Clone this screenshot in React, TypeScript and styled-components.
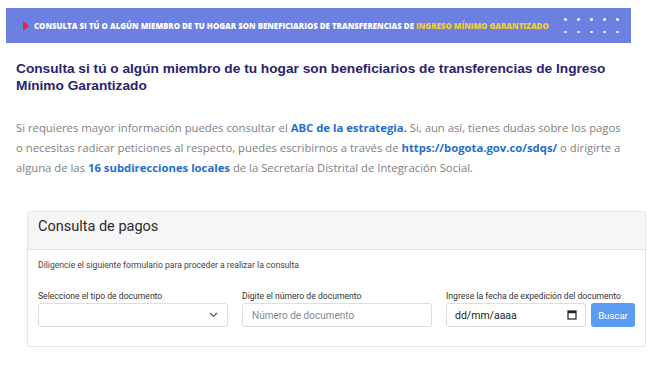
import React from 'react';
import styled, { createGlobalStyle } from 'styled-components';

const GlobalStyle = createGlobalStyle`
  html, body {
    margin: 0;
    padding: 0;
    background: #ffffff;
  }
  * {
    box-sizing: border-box;
  }
`;

const Page = styled.div`
  width: 650px;
  height: 365px;
  overflow: hidden;
  padding: 8px 19px 0 6px;
`;

const Banner = styled.div`
  height: 35px;
  width: 625px;
  background: #6c80e2;
  display: flex;
  align-items: center;
  padding-left: 17px;
  padding-right: 12px;
`;

const Arrow = styled.span`
  width: 0;
  height: 0;
  border-top: 5px solid transparent;
  border-bottom: 5px solid transparent;
  border-left: 6px solid #e8243c;
  margin-right: 5px;
`;

const BannerText = styled.span`
  font-family: 'Open Sans', sans-serif;
  font-weight: 800;
  font-size: 7.9px;
  color: #ffffff;
  white-space: nowrap;
  .gold {
    color: #f3cf2a;
  }
`;

const Dots = styled.div`
  margin-left: auto;
  display: grid;
  grid-template-columns: repeat(5, 3px);
  column-gap: 10px;
  row-gap: 10px;
  span {
    width: 2.5px;
    height: 2.5px;
    border-radius: 50%;
    background: #e6eaff;
  }
`;

const Content = styled.div`
  padding: 0 0 0 10px;
`;

const Heading = styled.h2`
  margin: 17px 0 0;
  font-family: 'Liberation Sans', Arial, sans-serif;
  font-weight: 700;
  font-size: 13.7px;
  line-height: 17px;
  color: #27246f;
`;

const Lead = styled.p`
  margin: 24px 0 0;
  max-width: 606px;
  font-family: 'Open Sans', sans-serif;
  font-size: 11.3px;
  line-height: 20px;
  color: #7f7f7f;
  a {
    color: #1f6fd1;
    font-weight: 700;
    text-decoration: none;
  }
`;

const Card = styled.div`
  margin: 33px 0 0 21px;
  width: 619px;
  border: 1px solid #e6e6e6;
  border-radius: 3px;
  font-family: Roboto, sans-serif;
`;

const CardHeader = styled.div`
  height: 38px;
  background: #f6f6f6;
  border-bottom: 1px solid #e3e3e3;
  padding: 6px 10px;
  font-size: 14.5px;
  color: #2b2b2b;
`;

const CardBody = styled.div`
  padding: 10px 10px 19px 10px;
`;

const Hint = styled.div`
  font-size: 8.6px;
  color: #444;
`;

const FieldRow = styled.div`
  display: grid;
  grid-template-columns: 190px 190px 189px;
  column-gap: 14px;
  margin-top: 21px;
`;

const Field = styled.div`
  display: flex;
  flex-direction: column;
`;

const Label = styled.label`
  font-size: 8.6px;
  color: #333;
  margin-bottom: 2px;
`;

const Box = styled.div`
  height: 24px;
  border: 1px solid #dedede;
  border-radius: 3px;
  background: #fff;
  display: flex;
  align-items: center;
  padding: 0 9px;
  font-size: 10px;
  color: #888;
`;

const SelectBox = styled(Box)`
  justify-content: flex-end;
  padding-right: 9px;
`;

const DateWrap = styled.div`
  display: flex;
  gap: 5px;
`;

const DateBox = styled(Box)`
  flex: 1;
  justify-content: space-between;
  color: #222;
  font-size: 10.5px;
  padding: 0 8px 0 8px;
`;

const Button = styled.button`
  height: 24px;
  width: 44px;
  border: none;
  border-radius: 3px;
  background: #5b9cf2;
  color: #ffffff;
  font-family: Roboto, sans-serif;
  font-size: 9.6px;
  padding: 0;
`;

const App = () => {
  return (
    <>
      <GlobalStyle />
      <Page>
        <Banner>
          <Arrow />
          <BannerText>
            CONSULTA SI TÚ O ALGÚN MIEMBRO DE TU HOGAR SON BENEFICIARIOS DE TRANSFERENCIAS DE{' '}
            <span className="gold">INGRESO MÍNIMO GARANTIZADO</span>
          </BannerText>
          <Dots>
            {Array.from({ length: 10 }).map((_, i) => (
              <span key={i} />
            ))}
          </Dots>
        </Banner>
        <Content>
          <Heading>
            Consulta si tú o algún miembro de tu hogar son beneficiarios de transferencias de Ingreso Mínimo Garantizado
          </Heading>
          <Lead>
            Si requieres mayor información puedes consultar el <a href="#">ABC de la estrategia.</a> Si, aun así, tienes
            dudas sobre los pagos o necesitas radicar peticiones al respecto, puedes escribirnos a través de{' '}
            <a href="#">https://bogota.gov.co/sdqs/</a> o dirigirte a alguna de las{' '}
            <a href="#">16 subdirecciones locales</a> de la Secretaría Distrital de Integración Social.
          </Lead>
        </Content>
        <Card>
          <CardHeader>Consulta de pagos</CardHeader>
          <CardBody>
            <Hint>Diligencie el siguiente formulario para proceder a realizar la consulta</Hint>
            <FieldRow>
              <Field>
                <Label>Seleccione el tipo de documento</Label>
                <SelectBox>
                  <svg width="9" height="6" viewBox="0 0 9 6" fill="none">
                    <path d="M1 1l3.5 3.5L8 1" stroke="#555" strokeWidth="1.2" />
                  </svg>
                </SelectBox>
              </Field>
              <Field>
                <Label>Digite el número de documento</Label>
                <Box>Número de documento</Box>
              </Field>
              <Field>
                <Label>Ingrese la fecha de expedición del documento</Label>
                <DateWrap>
                  <DateBox>
                    <span>dd/mm/aaaa</span>
                    <svg width="10" height="10" viewBox="0 0 10 10">
                      <rect x="1" y="1" width="8" height="8" fill="none" stroke="#222" strokeWidth="1.2" />
                      <rect x="1" y="1" width="8" height="2.2" fill="#222" />
                    </svg>
                  </DateBox>
                  <Button>Buscar</Button>
                </DateWrap>
              </Field>
            </FieldRow>
          </CardBody>
        </Card>
      </Page>
    </>
  );
};

export default App;
